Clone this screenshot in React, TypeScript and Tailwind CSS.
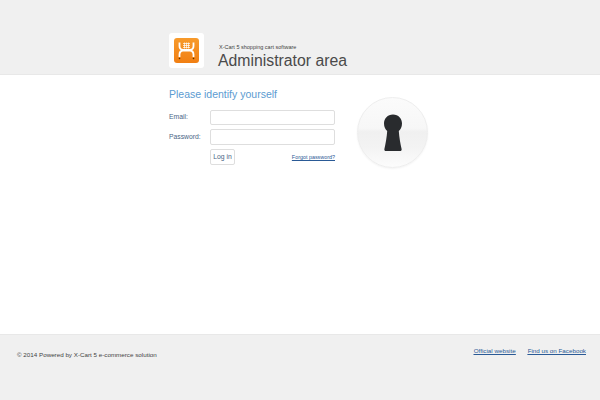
function CartLogo() {
  return (
    <div className="w-[35px] h-[35px] bg-white rounded-[3px] flex items-center justify-center">
      <div className="w-[25px] h-[25px] rounded-[3px] bg-gradient-to-b from-[#f79a2b] to-[#f17f12] flex items-center justify-center">
        <svg width="19" height="19" viewBox="0 0 19 19" fill="none" stroke="#fff" strokeWidth="1.8">
          <path d="M2.5 1.5 V5 Q2.5 8.5 6 9 H13 Q16.5 8.5 16.5 5 V1.5" />
          <path d="M2.5 16 V13.5 Q2.5 10 6 9.5 H13 Q16.5 10 16.5 13.5 V16" />
          <path d="M6 2.5h7M6 4.5h7M6 6.5h7M7.5 1.5v6M9.5 1.5v6M11.5 1.5v6" strokeWidth="0.7" />
          <circle cx="2.5" cy="17.5" r="0.8" fill="#5a3000" stroke="none" />
          <circle cx="16.5" cy="17.5" r="0.8" fill="#5a3000" stroke="none" />
        </svg>
      </div>
    </div>
  );
}

function Keyhole() {
  return (
    <div className="w-[71px] h-[71px] rounded-full border border-[#eeeeee] bg-[linear-gradient(180deg,#fbfbfb_0%,#f7f7f7_44%,#f0f0f0_49%,#f3f3f3_72%,#fcfcfc_100%)] shadow-[0_1px_2px_rgba(0,0,0,0.05)] flex items-center justify-center">
      <svg width="20" height="38" viewBox="0 0 20 38">
        <path
          d="M10 0.5 C15.5 0.5 19 4.5 19 9.5 C19 13 17.5 15.5 15.8 17 C16.2 23 17.5 30 18.6 35 C18.9 36.5 18.2 37 17 37 H3 C1.8 37 1.1 36.5 1.4 35 C2.5 30 3.8 23 4.2 17 C2.5 15.5 1 13 1 9.5 C1 4.5 4.5 0.5 10 0.5 Z"
          fill="#292b2e"
        />
      </svg>
    </div>
  );
}

export default function App() {
  return (
    <div className="w-[600px] h-[400px] flex flex-col bg-white font-['Liberation_Sans',Arial,sans-serif] overflow-hidden">
      {/* Header */}
      <div className="h-[75px] shrink-0 bg-[#f0f0f0] border-b border-[#e8e8e8] pl-[169px] pt-[33px] flex">
        <CartLogo />
        <div className="ml-[14px] pt-[10px]">
          <p className="text-[5.5px] leading-[8px] text-[#444] ml-[1px]">X-Cart 5 shopping cart software</p>
          <h1 className="text-[15.8px] leading-[20px] text-[#4a4a4a]">Administrator area</h1>
        </div>
      </div>

      {/* Login */}
      <div className="flex-1 pl-[169px] flex">
        <div className="w-[166px] pt-[12px]">
          <h2 className="text-[10.5px] leading-[14px] text-[#5b9bd1]">Please identify yourself</h2>
          <div className="mt-[9px] flex flex-col gap-[4px]">
            <label className="flex items-center">
              <span className="w-[41px] text-[6.8px] text-[#4a6585]">Email:</span>
              <input className="w-[125px] h-[15px] bg-white border border-[#dedede] rounded-[2px]" />
            </label>
            <label className="flex items-center">
              <span className="w-[41px] text-[6.8px] text-[#4a6585]">Password:</span>
              <input type="password" className="w-[125px] h-[16px] bg-white border border-[#dedede] rounded-[2px]" />
            </label>
          </div>
          <div className="mt-[4px] ml-[41px] flex items-center justify-between">
            <button className="w-[25px] h-[16px] border border-[#dedede] rounded-[2px] bg-white text-[6.8px] text-[#4a6585]">Log in</button>
            <a className="text-[5.4px] text-[#2a5a96] underline" href="#">Forgot password?</a>
          </div>
        </div>
        <div className="ml-[22px] pt-[22px]">
          <Keyhole />
        </div>
      </div>

      {/* Footer */}
      <div className="h-[66px] shrink-0 bg-[#f0f0f0] border-t border-[#e8e8e8] pl-[17px] pr-[14px] flex justify-between">
        <p className="pt-[15px] text-[6.25px] leading-[9px] text-[#444]">© 2014 Powered by X-Cart 5 e-commerce solution</p>
        <div className="pt-[11px] flex gap-[12px] text-[6.25px] leading-[9px] text-[#2a5a96] underline">
          <a href="#">Official website</a>
          <a href="#">Find us on Facebook</a>
        </div>
      </div>
    </div>
  );
}
